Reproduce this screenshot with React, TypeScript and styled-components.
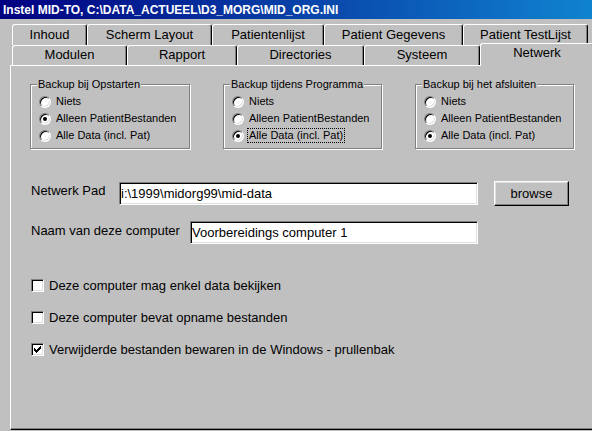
import React from 'react';
import styled, { createGlobalStyle } from 'styled-components';

const Global = createGlobalStyle`
  html, body { margin: 0; padding: 0; background: #c0c0c0; overflow: hidden; }
  body { font-family: "Liberation Sans", Arial, sans-serif; color: #000; }
`;

const Window = styled.div`
  width: 596px;
  height: 431px;
  background: #c0c0c0;
  display: flex;
  flex-direction: column;
`;

const TitleBar = styled.div`
  height: 19px;
  box-sizing: border-box;
  padding: 1px 0 0 3px;
  background: linear-gradient(to right, #000080, #1084d0);
  color: #fff;
  font-weight: bold;
  font-size: 12px;
  line-height: 18px;
  white-space: nowrap;
`;

const TabStrip = styled.div`
  display: flex;
  flex-direction: column;
  padding: 5px 0 0 12px;
`;

const TabRow = styled.div<{ $h: number }>`
  display: flex;
  align-items: flex-start;
  height: ${p => p.$h}px;
`;

const Tab = styled.div<{ $w: number; $h: number; $selected?: boolean; $pt: number }>`
  width: ${p => p.$w}px;
  height: ${p => (p.$selected ? p.$h + 3 : p.$h)}px;
  margin-top: ${p => (p.$selected ? -2 : 0)}px;
  box-sizing: border-box;
  flex: none;
  padding-top: ${p => p.$pt}px;
  background: #c0c0c0;
  border-top: 1px solid #fff;
  border-left: 1px solid #fff;
  border-right: 1px solid #000;
  border-radius: 3px 3px 0 0;
  box-shadow: inset -1px 0 0 #808080;
  font-size: 13px;
  line-height: 15px;
  text-align: center;
  white-space: nowrap;
  position: ${p => (p.$selected ? 'relative' : 'static')};
  z-index: ${p => (p.$selected ? 2 : 'auto')};
`;

const Panel = styled.div`
  margin-left: 10px;
  height: 365px;
  box-sizing: border-box;
  border-top: 1px solid #fff;
  border-left: 1px solid #fff;
  border-right: 1px solid #000;
  border-bottom: 1px solid #000;
  box-shadow: inset -1px -1px 0 #808080;
  padding: 18px 0 0 19px;
  display: flex;
  flex-direction: column;
`;

const GroupRow = styled.div`
  display: flex;
  gap: 33px;
`;

const GroupBox = styled.div<{ $w: number }>`
  width: ${p => p.$w}px;
  height: 65px;
  box-sizing: border-box;
  border: 1px solid #808080;
  box-shadow: inset 1px 1px 0 #fff, 1px 1px 0 #fff;
  display: flex;
  flex-direction: column;
`;

const Legend = styled.span`
  align-self: flex-start;
  margin: -7px 0 0 6px;
  padding: 0 1px;
  background: #c0c0c0;
  font-size: 11px;
  line-height: 13px;
  white-space: nowrap;
`;

const RadioList = styled.div`
  display: flex;
  flex-direction: column;
  margin-top: 2px;
`;

const RadioRow = styled.div`
  display: flex;
  align-items: center;
  height: 17px;
  padding-left: 8px;
  gap: 5px;
`;

const RadioCircle = styled.span<{ $checked?: boolean }>`
  width: 12px;
  height: 12px;
  box-sizing: border-box;
  flex: none;
  border-radius: 50%;
  background: #fff;
  border: 1px solid;
  border-color: #808080 #fff #fff #808080;
  box-shadow: inset 1px 1px 0 #000, inset -1px -1px 0 #dfdfdf;
  display: flex;
  align-items: center;
  justify-content: center;
  &::after {
    content: '';
    width: 4px;
    height: 4px;
    border-radius: 50%;
    background: ${p => (p.$checked ? '#000' : 'transparent')};
  }
`;

const SmallLabel = styled.span<{ $focus?: boolean }>`
  font-size: 11px;
  line-height: 13px;
  white-space: nowrap;
  border: 1px dotted ${p => (p.$focus ? '#000' : 'transparent')};
  margin-left: ${p => (p.$focus ? -2 : -1)}px;
  padding: 0 ${p => (p.$focus ? 1 : 0)}px;
`;

const Form = styled.div`
  display: flex;
  flex-direction: column;
  padding-left: 1px;
`;

const FieldRow = styled.div<{ $mt: number }>`
  display: flex;
  align-items: flex-start;
  margin-top: ${p => p.$mt}px;
`;

const FieldLabel = styled.span<{ $w: number }>`
  width: ${p => p.$w}px;
  flex: none;
  margin-top: 2px;
  font-size: 13px;
  line-height: 15px;
  white-space: nowrap;
`;

const TextBox = styled.input<{ $w: number; $mt?: number }>`
  width: ${p => p.$w}px;
  height: 23px;
  margin: ${p => p.$mt ?? 0}px 0 0 0;
  box-sizing: border-box;
  background: #fff;
  border: 1px solid;
  border-color: #808080 #fff #fff #808080;
  box-shadow: inset 1px 1px 0 #000, inset -1px -1px 0 #dfdfdf;
  padding: 0 0 0 1px;
  font-family: "Liberation Sans", Arial, sans-serif;
  font-size: 13px;
  color: #000;
  outline: none;
`;

const Button = styled.button`
  width: 75px;
  height: 25px;
  margin-left: 16px;
  box-sizing: border-box;
  background: #c0c0c0;
  border: 1px solid;
  border-color: #fff #000 #000 #fff;
  box-shadow: inset -1px -1px 0 #808080, inset 1px 1px 0 #dfdfdf;
  font-family: "Liberation Sans", Arial, sans-serif;
  font-size: 13px;
  color: #000;
  padding: 0;
`;

const CheckList = styled.div`
  display: flex;
  flex-direction: column;
  gap: 17px;
  margin-top: 34px;
  padding-left: 1px;
`;

const CheckRow = styled.div`
  display: flex;
  align-items: center;
  height: 15px;
  gap: 5px;
  font-size: 13px;
  line-height: 15px;
  white-space: nowrap;
`;

const CheckBox = styled.span`
  width: 13px;
  height: 13px;
  box-sizing: border-box;
  flex: none;
  background: #fff;
  border: 1px solid;
  border-color: #808080 #fff #fff #808080;
  box-shadow: inset 1px 1px 0 #000, inset -1px -1px 0 #dfdfdf;
  display: flex;
  padding: 2px 0 0 2px;
`;

const CheckMark = () => (
  <svg width="7" height="7" viewBox="0 0 7 7" shapeRendering="crispEdges">
    {[2, 3, 4, 3, 2, 1, 0].map((top, c) => (
      <rect key={c} x={c} y={top} width="1" height="3" fill="#000" />
    ))}
  </svg>
);

const row1 = [
  { label: 'Inhoud', w: 75 },
  { label: 'Scherm Layout', w: 125 },
  { label: 'Patientenlijst', w: 112 },
  { label: 'Patient Gegevens', w: 139 },
  { label: 'Patient TestLijst', w: 125 },
];

const row2 = [
  { label: 'Modulen', w: 115 },
  { label: 'Rapport', w: 110 },
  { label: 'Directories', w: 127 },
  { label: 'Systeem', w: 116 },
  { label: 'Netwerk', w: 114, selected: true },
];

const options = ['Niets', 'Alleen PatientBestanden', 'Alle Data (incl. Pat)'];

const groups = [
  { title: 'Backup bij Opstarten', w: 160, checked: 1, focus: -1 },
  { title: 'Backup tijdens Programma', w: 159, checked: 2, focus: 2 },
  { title: 'Backup bij het afsluiten', w: 159, checked: 2, focus: -1 },
];

const checks = [
  { label: 'Deze computer mag enkel data bekijken', checked: false },
  { label: 'Deze computer bevat opname bestanden', checked: false },
  { label: 'Verwijderde bestanden bewaren in de Windows - prullenbak', checked: true },
];

export default function App() {
  return (
    <>
      <Global />
      <Window>
        <TitleBar>Instel MID-TO, C:\DATA_ACTUEEL\D3_MORG\MID_ORG.INI</TitleBar>
        <TabStrip>
          <TabRow $h={21}>
            {row1.map(t => (
              <Tab key={t.label} $w={t.w} $h={21} $pt={2}>
                {t.label}
              </Tab>
            ))}
          </TabRow>
          <TabRow $h={20}>
            {row2.map(t => (
              <Tab key={t.label} $w={t.w} $h={20} $pt={1} $selected={t.selected}>
                {t.label}
              </Tab>
            ))}
          </TabRow>
        </TabStrip>
        <Panel>
          <GroupRow>
            {groups.map(g => (
              <GroupBox key={g.title} $w={g.w}>
                <Legend>{g.title}</Legend>
                <RadioList>
                  {options.map((o, i) => (
                    <RadioRow key={o}>
                      <RadioCircle $checked={g.checked === i} />
                      <SmallLabel $focus={g.focus === i}>{o}</SmallLabel>
                    </RadioRow>
                  ))}
                </RadioList>
              </GroupBox>
            ))}
          </GroupRow>
          <Form>
            <FieldRow $mt={32}>
              <FieldLabel $w={88}>Netwerk Pad</FieldLabel>
              <TextBox $w={359} $mt={1} readOnly defaultValue={'i:\\1999\\midorg99\\mid-data'} />
              <Button>browse</Button>
            </FieldRow>
            <FieldRow $mt={15}>
              <FieldLabel $w={159}>Naam van deze computer</FieldLabel>
              <TextBox $w={288} readOnly defaultValue="Voorbereidings computer 1" />
            </FieldRow>
          </Form>
          <CheckList>
            {checks.map(c => (
              <CheckRow key={c.label}>
                <CheckBox>{c.checked && <CheckMark />}</CheckBox>
                {c.label}
              </CheckRow>
            ))}
          </CheckList>
        </Panel>
      </Window>
    </>
  );
}
